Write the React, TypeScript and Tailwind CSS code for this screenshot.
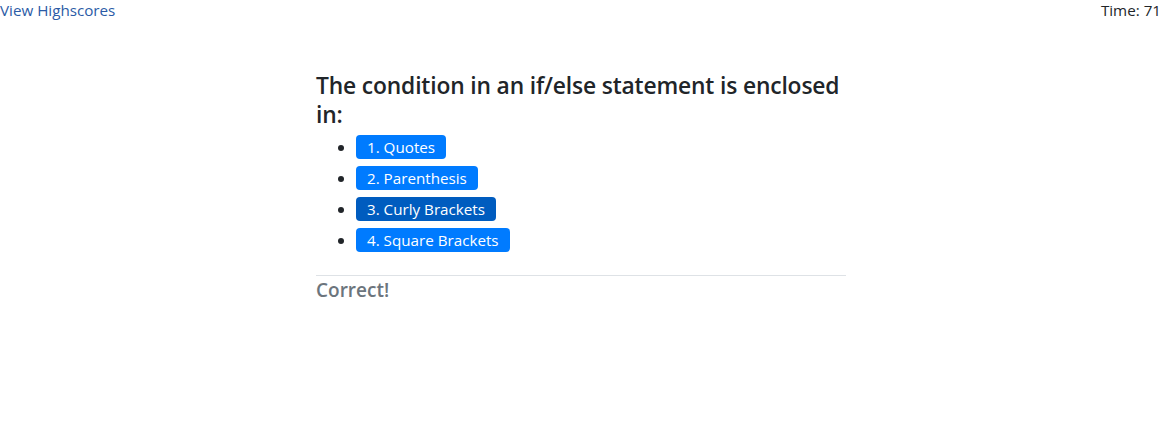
import React from 'react';

const choices = ['1. Quotes', '2. Parenthesis', '3. Curly Brackets', '4. Square Brackets'];

const App: React.FC = () => {
  const font = { fontFamily: '"Segoe UI", "Open Sans", "Noto Sans", sans-serif' };
  return (
    <div className="min-h-[428px] bg-white text-[#212529]" style={font}>
      <div className="flex justify-between h-5 leading-5 text-[15.2px] pr-[5px]">
        <a href="#" className="text-[#2b5ba6]">View Highscores</a>
        <span>Time: 71</span>
      </div>

      <div className="w-[530px] ml-[calc(50%-267px)] mt-[45px]">
        <h4 className="text-[22.8px] leading-[28.8px] font-semibold tracking-[-0.15px] mb-1 pt-[7px]">
          The condition in an if/else statement is enclosed in:
        </h4>
        <ul className="list-disc pl-10">
          {choices.map((c, i) => (
            <li key={c} className="h-[31px] pt-[1px]">
              <button
                className={`h-6 px-[11px] rounded text-white text-[15.2px] leading-6 ${
                  i === 2 ? 'bg-[#005cbf]' : 'bg-[#007bff]'
                }`}
              >
                {c}
              </button>
            </li>
          ))}
        </ul>
        <hr className="mt-[17px] border-t border-[#dee2e6]" />
        <h5 className="text-[19px] leading-6 font-semibold text-[#6c757d] pt-[2px]">Correct!</h5>
      </div>
    </div>
  );
};

export default App;
